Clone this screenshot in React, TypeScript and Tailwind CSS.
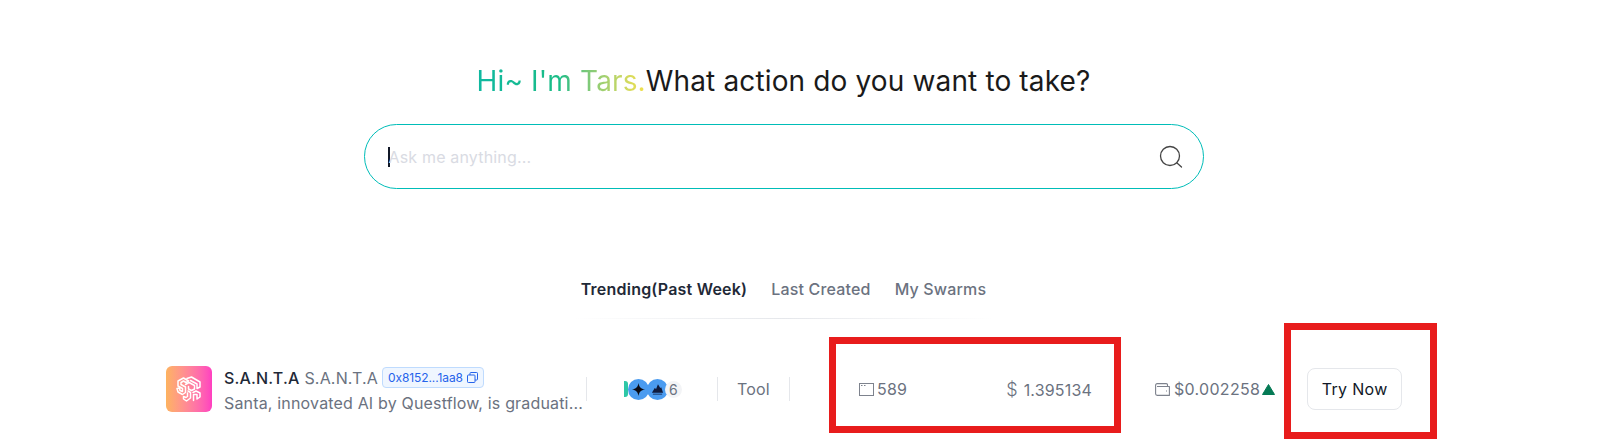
import React from "react";

function SantaLogo() {
  return (
    <div className="w-[46px] h-[46px] rounded-[6px] bg-gradient-to-r from-[#fdb35f] to-[#ff3fc0] flex items-center justify-center shrink-0">
      <svg width="26" height="26" viewBox="0 0 26 26" fill="none" stroke="#fff" strokeWidth="1.500" strokeLinejoin="round" strokeLinecap="round">
        <path d="M2 8 L2 5 L7.500 2 L12.500 5 L10 6.500 L7.500 5 L5 6.500 L5 8.500 L9.500 11 L9.500 16.500 L6.500 18.500 L2 16 L1 12.500 L3.500 12 L4 14.500 L6.500 15.500 L6.500 12.500 L2 10 Z" />
        <path d="M11 2.500 L15.500 1 L24 6 L24 11 L21 12.500 L21 8 L14.500 4.500" />
        <path d="M9.500 8.500 L13 6.500 L18.500 9.500 L18.500 13 L15.500 14.500 L12.500 13 L12.500 10.500" />
        <path d="M12 15 L14.500 16.500 L14.500 22 L10.500 25 L7.500 23 L7.500 20.500 L10 21.500 L11.500 20.500 L11.500 17" />
        <path d="M17 16.500 L20 15 L24 17 L24 21 L21 23 L21 18.500 L17.500 18.500 L17.500 24.500" />
      </svg>
    </div>
  );
}

function Sep({ className }: { className: string }) {
  return <div className={`w-px h-[24px] bg-[#e5e7eb] shrink-0 ${className}`} />;
}

export default function App() {
  return (
    <div className="w-[1603px] h-[440px] bg-white overflow-hidden relative font-['Inter',sans-serif]">
      <div className="w-[1567px] flex flex-col items-center pt-[63px]">
        <h1 className="text-[28px] leading-[36px] font-normal tracking-[0.14px] text-[#1a1a1a] whitespace-nowrap">
          <span className="bg-gradient-to-r from-[#0fb8a0] via-[#1bbd85] to-[#f5e04a] bg-clip-text text-transparent">Hi~ I'm Tars.</span>
          What action do you want to take?
        </h1>
        <div className="mt-[25px] w-[840px] h-[65px] rounded-full border border-[#00bdb8] flex items-center pt-[1px] pl-[23px] pr-[20px]">
          <div className="w-[2px] h-[20px] bg-[#111827] shrink-0" />
          <span className="text-[16px] tracking-[0.17px] text-[#d9dbe3] -ml-px">Ask me anything...</span>
          <svg className="ml-auto" width="24" height="24" viewBox="0 0 24 24" fill="none" stroke="#444" strokeWidth="1.300" strokeLinecap="round">
            <circle cx="11" cy="11" r="9.500" />
            <path d="M18 18 L22.500 22" />
          </svg>
        </div>
        <div className="mt-[88px] flex items-center gap-[24px] text-[16px] leading-[24px] tracking-[0.17px] font-medium text-[#6b7280]">
          <span className="font-semibold tracking-[0.22px] text-[#1f2937]">Trending(Past Week)</span>
          <span>Last Created</span>
          <span>My Swarms</span>
        </div>
        <div className="mt-[17px] w-[420px] h-px bg-gradient-to-r from-white via-[#e5e7eb] to-white" />
      </div>

      <div className="mt-[46px] pl-[166px] flex items-center h-[48px] text-[16px] tracking-[0.17px] text-[#6b7280]">
        <SantaLogo />
        <div className="ml-[12px] w-[363px] shrink-0 min-w-0 pt-[2px]">
          <div className="flex items-center leading-[24px] h-[24px] whitespace-nowrap">
            <span className="font-medium text-[#1f2937]">S.A.N.T.A</span>
            <span className="ml-[5px]">S.A.N.T.A</span>
            <span className="ml-[4px] h-[21px] px-[5px] flex items-center gap-[4px] rounded-[4px] border border-[#bfdbfe] bg-[#eff6ff] text-[12px] tracking-[-0.1px] text-[#2563eb]">
              0x8152...1aa8
              <svg width="11" height="11" viewBox="0 0 11 11" fill="none" stroke="currentColor" strokeWidth="1">
                <rect x="0.500" y="3" width="7.500" height="7.500" rx="0.800" />
                <path d="M3 3 V1.300 C3 0.800 3.300 0.500 3.800 0.500 H9.700 C10.200 0.500 10.500 0.800 10.500 1.300 V7.200 C10.500 7.700 10.200 8 9.700 8 H8" />
              </svg>
            </span>
          </div>
          <div className="mt-[1px] leading-[24px] whitespace-nowrap">Santa, innovated AI by Questflow, is graduati...</div>
        </div>
        <Sep className="ml-[-1px]" />
        <div className="ml-[37px] w-[94px] flex items-center shrink-0">
          <div className="w-[4px] h-[16px] bg-[#2ec7a6] rounded-r-[3px] shrink-0" />
          <div className="w-[21px] h-[21px] rounded-full bg-[#4a9bf0] flex items-center justify-center relative z-10 shrink-0">
            <svg width="15" height="15" viewBox="0 0 16 16"><path d="M8 1 C8.800 5.500 10.500 7.200 15 8 C10.500 8.800 8.800 10.500 8 15 C7.200 10.500 5.500 8.800 1 8 C5.500 7.200 7.200 5.500 8 1 Z" fill="#0a0a14" /></svg>
          </div>
          <div className="w-[21px] h-[21px] rounded-full bg-[#4a9bf0] flex items-center justify-center -ml-[2px] relative z-10 shrink-0">
            <svg width="13" height="12" viewBox="0 0 14 12"><path d="M1 10 L4 5 L5.500 6 L7.500 1 L10 5 L11 4 L13 10 Z M2 11 L12 11 L12 12 L2 12 Z" fill="#0f1b3d" /></svg>
          </div>
          <div className="w-[17px] h-[17px] rounded-full bg-[#f3f4f6] flex items-center justify-center text-[14px] -ml-[3px] relative z-20 shrink-0">6</div>
        </div>
        <Sep className="ml-[-1px]" />
        <span className="ml-[19px] w-[52px] shrink-0">Tool</span>
        <Sep className="" />
        <div className="ml-[69px] w-[233px] shrink-0 flex items-center justify-between">
          <div className="flex items-center gap-[3px]">
            <svg width="15" height="13" viewBox="0 0 15 13" fill="none" stroke="#7d828d" strokeWidth="1">
              <rect x="0.500" y="0.500" width="14" height="12" />
              <path d="M2 2.500 H3.500 M5 2.500 H6.500" />
            </svg>
            <span>589</span>
          </div>
          <span>
            <span className="text-[18px] font-light">$</span>
            <span className="ml-[6px]">1.395134</span>
          </span>
        </div>
        <div className="ml-[63px] flex items-center shrink-0">
          <svg width="15" height="13" viewBox="0 0 15 13" fill="none" stroke="#7d828d" strokeWidth="1.100" strokeLinejoin="round">
            <path d="M12.500 3 V1.800 C12.500 1 12 0.600 11.300 0.600 H2.200 C1.200 0.600 0.600 1.300 0.600 2.200 V10.800 C0.600 11.700 1.200 12.400 2.200 12.400 H14.400 V3.500 H2" />
            <path d="M11 8 H12" />
          </svg>
          <span className="ml-[4px] tracking-[0.3px]">$0.002258</span>
          <svg className="ml-[2px]" width="13" height="11" viewBox="0 0 13 11"><path d="M6.500 0.500 L12.500 10.500 H0.500 Z" fill="#057a55" stroke="#057a55" strokeLinejoin="round" /></svg>
        </div>
        <button className="ml-[32px] w-[95px] h-[42px] rounded-[8px] border border-[#e5e7eb] bg-white text-[16px] font-normal tracking-[0.3px] text-[#111827] shrink-0">Try Now</button>
      </div>

      <div className="absolute left-[829px] top-[337px] w-[292px] h-[96px] border-[7px] border-[#e81c1c]" />
      <div className="absolute left-[1284px] top-[323px] w-[153px] h-[116px] border-[7px] border-[#e81c1c]" />
    </div>
  );
}
